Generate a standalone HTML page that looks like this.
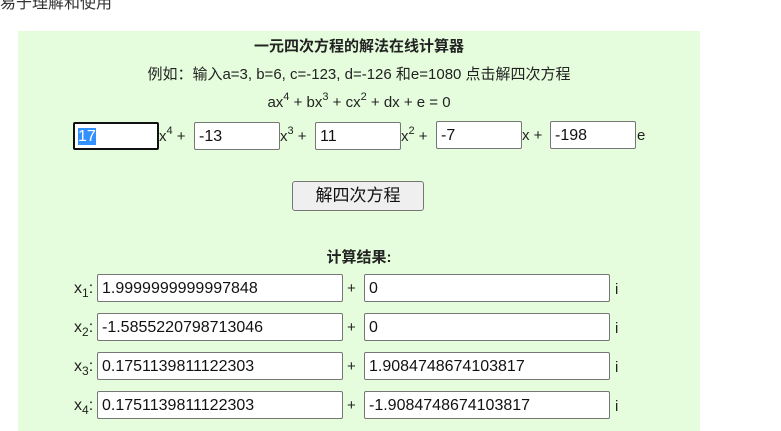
<!DOCTYPE html>
<html><head><meta charset="utf-8"><style>
body{margin:0;width:781px;height:426px;overflow:hidden;background:#fff;font-family:"Liberation Sans","Noto Sans CJK SC",sans-serif;color:#222;position:relative}
.a{position:absolute;white-space:nowrap}
.p{position:absolute;left:18px;top:31px;width:682px;height:400px;background:#e5fddc}
.in{position:absolute;box-sizing:border-box;height:28px;border:1px solid #767676;border-radius:2px;background:#fff;font-size:16px;padding:4px 4px 0;line-height:20px;color:#111}
.t{font-size:15px}
sup{font-size:11px;vertical-align:7px;line-height:0}
sub{font-size:12px;vertical-align:-4px;line-height:0}
</style></head><body>
<div class="a" style="left:0;top:-11px;font-size:16px;color:#333">易于理解和使用</div>
<div class="p"></div>
<div class="a" style="left:0;width:718px;text-align:center;top:35px;font-size:15px;font-weight:bold">一元四次方程的解法在线计算器</div>
<div class="a" style="left:0;width:718px;text-align:center;top:63px;font-size:15px">例如：输入a=3, b=6, c=-123, d=-126 和e=1080 点击解四次方程</div>
<div class="a" style="left:0;width:718px;text-align:center;top:94px;font-size:15px">ax<sup>4</sup> + bx<sup>3</sup> + cx<sup>2</sup> + dx + e = 0</div>
<div class="in" style="left:73px;top:122px;width:86px;border:2px solid #111;padding:3px 3px 0"><span style="background:#3390ff;color:#fff">17</span></div>
<div class="a t" style="left:159px;top:128px">x<sup>4</sup> +</div>
<div class="in" style="left:194px;top:122px;width:86px">-13</div>
<div class="a t" style="left:280px;top:128px">x<sup>3</sup> +</div>
<div class="in" style="left:315px;top:122px;width:86px">11</div>
<div class="a t" style="left:401px;top:128px">x<sup>2</sup> +</div>
<div class="in" style="left:436px;top:121px;width:86px">-7</div>
<div class="a t" style="left:522px;top:127px">x +</div>
<div class="in" style="left:550px;top:121px;width:86px">-198</div>
<div class="a t" style="left:637px;top:127px">e</div>
<div class="a" style="left:292px;top:181px;width:132px;height:30px;box-sizing:border-box;border:1px solid #767676;border-radius:3px;background:#efefef;font-size:17px;text-align:center;line-height:28px;color:#111">解四次方程</div>
<div class="a" style="left:0;width:718px;text-align:center;top:246px;font-size:15px;font-weight:bold">计算结果:</div>
<div class="a t" style="left:74px;top:280px;font-size:16px">x<sub>1</sub>:</div>
<div class="in" style="left:97px;top:274px;width:246px">1.9999999999997848</div>
<div class="a t" style="left:347px;top:280px">+</div>
<div class="in" style="left:364px;top:274px;width:246px">0</div>
<div class="a t" style="left:615px;top:281px">i</div>
<div class="a t" style="left:74px;top:319px;font-size:16px">x<sub>2</sub>:</div>
<div class="in" style="left:97px;top:313px;width:246px">-1.5855220798713046</div>
<div class="a t" style="left:347px;top:319px">+</div>
<div class="in" style="left:364px;top:313px;width:246px">0</div>
<div class="a t" style="left:615px;top:320px">i</div>
<div class="a t" style="left:74px;top:358px;font-size:16px">x<sub>3</sub>:</div>
<div class="in" style="left:97px;top:352px;width:246px">0.1751139811122303</div>
<div class="a t" style="left:347px;top:358px">+</div>
<div class="in" style="left:364px;top:352px;width:246px">1.9084748674103817</div>
<div class="a t" style="left:615px;top:359px">i</div>
<div class="a t" style="left:74px;top:397px;font-size:16px">x<sub>4</sub>:</div>
<div class="in" style="left:97px;top:391px;width:246px">0.1751139811122303</div>
<div class="a t" style="left:347px;top:397px">+</div>
<div class="in" style="left:364px;top:391px;width:246px">-1.9084748674103817</div>
<div class="a t" style="left:615px;top:398px">i</div>
</body></html>
